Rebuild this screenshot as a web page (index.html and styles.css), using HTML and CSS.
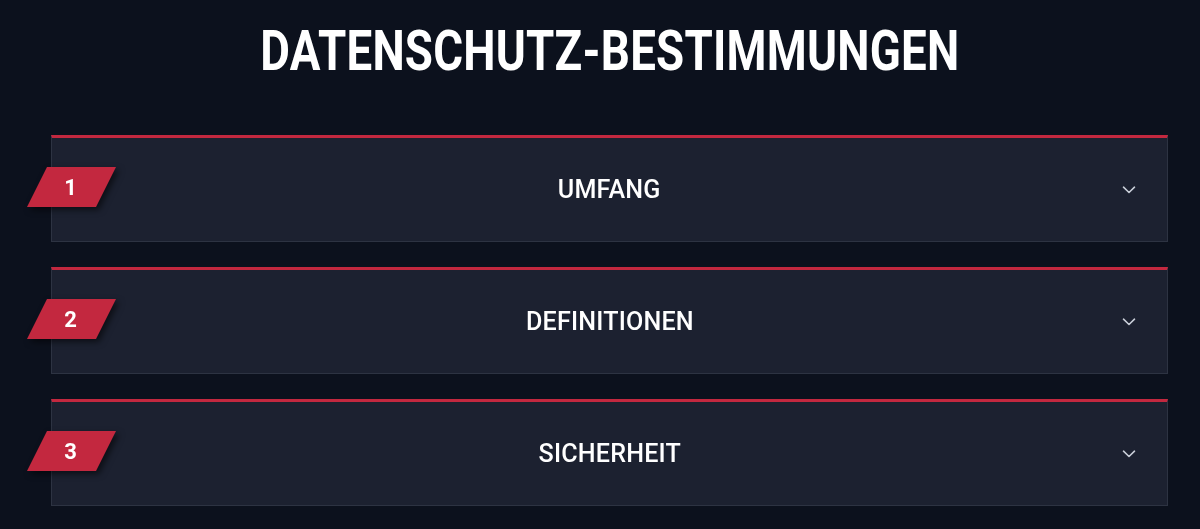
FILE: index.html
```html
<!DOCTYPE html>
<html lang="de">

<head>
    <meta charset="UTF-8">
    <meta name="viewport" content="width=device-width, initial-scale=1.0">
    <title>Datenschutz-Bestimmungen</title>
    <link rel="stylesheet" href="styles.css">
</head>

<body>

    <main class="page">
        <h1 class="page-title"><span>DATENSCHUTZ-BESTIMMUNGEN</span></h1>

        <div class="sections">
            <div class="section-card">
                <div class="badge"><span>1</span></div>
                <h2 class="section-title"><span>UMFANG</span></h2>
                <svg class="chevron" viewBox="0 0 14 8" width="14" height="8">
                    <path d="M1.5 1.2 L7 6.5 L12.5 1.2" />
                </svg>
            </div>

            <div class="section-card">
                <div class="badge"><span>2</span></div>
                <h2 class="section-title"><span>DEFINITIONEN</span></h2>
                <svg class="chevron" viewBox="0 0 14 8" width="14" height="8">
                    <path d="M1.5 1.2 L7 6.5 L12.5 1.2" />
                </svg>
            </div>

            <div class="section-card">
                <div class="badge"><span>3</span></div>
                <h2 class="section-title"><span>SICHERHEIT</span></h2>
                <svg class="chevron" viewBox="0 0 14 8" width="14" height="8">
                    <path d="M1.5 1.2 L7 6.5 L12.5 1.2" />
                </svg>
            </div>
        </div>
    </main>

</body>

</html>
```

FILE: styles.css
```css
/* Styles généraux */
* {
    margin: 0;
    padding: 0;
    box-sizing: border-box;
}

body {
    background-color: #0c111d;
    font-family: Roboto, "Liberation Sans", sans-serif;
    color: #ffffff;
    overflow: hidden;
}

.page {
    padding: 23px 32px 0 51px;
}

/* Titre principal */
.page-title {
    text-align: center;
    font-size: 56px;
    font-weight: 700;
    line-height: 56px;
    height: 56px;
    margin-bottom: 56px;
}

.page-title span {
    display: inline-block;
    transform: scaleX(0.815);
    letter-spacing: 0.3px;
}

/* Cartes de sections */
.sections {
    display: flex;
    flex-direction: column;
    gap: 25px;
}

.section-card {
    position: relative;
    height: 107px;
    background-color: #1c2130;
    border: 1px solid #2d3342;
    border-top: 3px solid #c3283f;
    display: flex;
    align-items: center;
    justify-content: center;
}

.badge {
    position: absolute;
    left: -25px;
    top: 29px;
    width: 89px;
    height: 40px;
    display: flex;
    align-items: center;
    justify-content: center;
    filter: drop-shadow(3px 3px 3px rgba(0, 0, 0, 0.55));
}

.badge::before {
    content: "";
    position: absolute;
    inset: 0;
    background-color: #c3283f;
    clip-path: polygon(20px 0, 89px 0, 69px 100%, 0 100%);
}

.badge span {
    position: relative;
    font-size: 22px;
    font-weight: 700;
    margin-left: -2px;
}

.section-title {
    font-size: 26px;
    font-weight: 500;
    letter-spacing: 0.2px;
    margin-top: -2px;
}

.section-title span {
    display: inline-block;
    transform: scaleX(0.965);
}

.chevron {
    position: absolute;
    right: 31px;
    top: 48px;
    fill: none;
    stroke: #c9ced8;
    stroke-width: 1.6;
    stroke-linecap: round;
    stroke-linejoin: round;
}
```
